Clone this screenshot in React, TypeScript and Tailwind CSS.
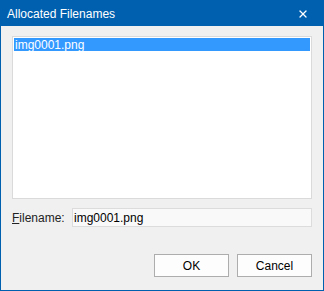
import { X } from "lucide-react";

export default function App() {
  return (
    <div
      className="flex h-[291px] w-[324px] flex-col bg-[#0060b0] px-px pb-px text-[12px] text-black"
      style={{ fontFamily: '"Liberation Sans", Arial, sans-serif' }}
    >
      {/* Title bar */}
      <div className="flex h-[26px] items-center justify-between pt-px pl-[6px] pr-[14px] text-white">
        <span>Allocated Filenames</span>
        <X size={12} strokeWidth={2.5} />
      </div>

      {/* Body */}
      <div className="flex flex-1 flex-col bg-[#f0f0f0] px-[11px] pt-[10px]">
        {/* List */}
        <div className="h-[163px] border border-[#dadada] bg-white p-px">
          <div className="flex h-[13px] items-center bg-[#3399ff] px-px leading-none text-white">
            img0001.png
          </div>
        </div>

        {/* Filename row */}
        <div className="mt-[9px] flex items-center">
          <span className="w-[60px] text-[#222]">
            <span className="underline">F</span>ilename:
          </span>
          <div className="flex h-[19px] flex-1 items-center border border-[#dcdcdc] bg-[#f9f9f9] px-[1px]">
            img0001.png
          </div>
        </div>

        {/* Buttons */}
        <div className="mt-[27px] flex justify-end gap-[8px]">
          <button className="h-[23px] w-[75px] border border-[#adadad] bg-[#fdfdfd]">OK</button>
          <button className="h-[23px] w-[75px] border border-[#adadad] bg-[#fdfdfd]">Cancel</button>
        </div>
      </div>
    </div>
  );
}
